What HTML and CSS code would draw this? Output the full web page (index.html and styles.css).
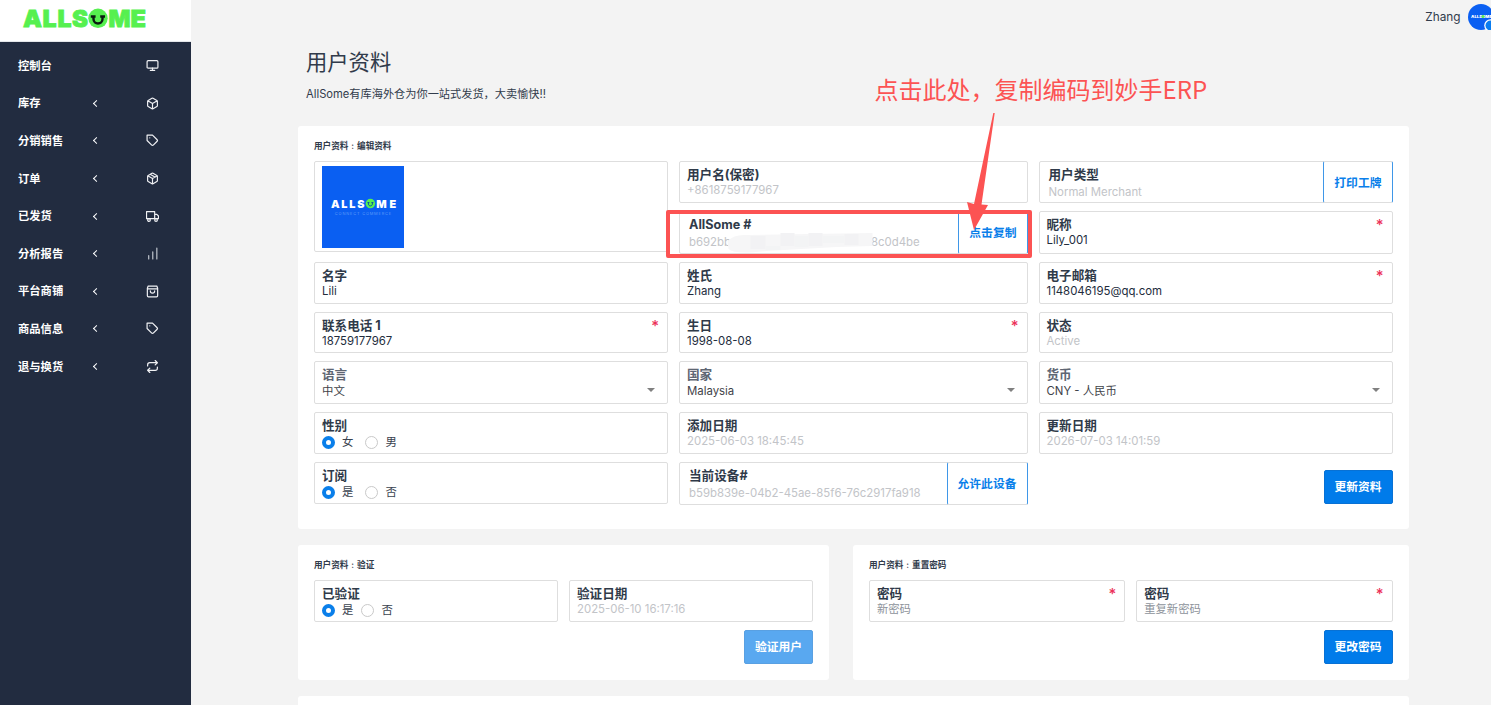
FILE: index.html
```
<!DOCTYPE html>
<html lang="zh-CN">
<head>
    <meta charset="UTF-8">
    <meta name="viewport" content="width=device-width, initial-scale=1.0">
    <title>用户资料</title>
    <link rel="stylesheet" href="styles.css">
</head>
<body>
    <aside class="sidebar">
        <div class="brand">
            <svg class="brand-logo" width="124" height="20" viewBox="0 0 124 20">
                <g class="brand-text">
                    <text x="0" y="18" textLength="19" lengthAdjust="spacingAndGlyphs">A</text>
                    <text x="19.5" y="18" textLength="14" lengthAdjust="spacingAndGlyphs">L</text>
                    <text x="34.500" y="18" textLength="14" lengthAdjust="spacingAndGlyphs">L</text>
                    <text x="49" y="18" textLength="16" lengthAdjust="spacingAndGlyphs">S</text>
                    <text x="85.500" y="18" textLength="22" lengthAdjust="spacingAndGlyphs">M</text>
                    <text x="107.500" y="18" textLength="15.5" lengthAdjust="spacingAndGlyphs">E</text>
                </g>
                <circle cx="75" cy="9.300" r="9.7" fill="#56f04f"/>
                <path d="M67.800 7.500h4.800M77.200 7.500h4.800M70.500 7.500v2.500c0 6 9 6 9 0V7.500" fill="none" stroke="#0b1a10" stroke-width="2.4"/>
            </svg>
        </div>
        <nav class="menu">
            <a class="menu-item"><span>控制台</span><i></i>
                <svg class="icon" viewBox="0 0 24 24"><rect x="2" y="3" width="20" height="14" rx="2"/><path d="M8 21h8M12 17v4"/></svg></a>
            <a class="menu-item"><span>库存</span><i class="chevron"></i>
                <svg class="icon" viewBox="0 0 24 24"><path d="M21 16V8a2 2 0 0 0-1-1.73l-7-4a2 2 0 0 0-2 0l-7 4A2 2 0 0 0 3 8v8a2 2 0 0 0 1 1.73l7 4a2 2 0 0 0 2 0l7-4A2 2 0 0 0 21 16zM3.27 6.96L12 12.01l8.73-5.05M12 22.08V12"/></svg></a>
            <a class="menu-item"><span>分销销售</span><i class="chevron"></i>
                <svg class="icon" viewBox="0 0 24 24"><path d="M20.59 13.41l-7.17 7.17a2 2 0 0 1-2.83 0L2 12V2h10l8.59 8.59a2 2 0 0 1 0 2.82zM7 7h.01"/></svg></a>
            <a class="menu-item"><span>订单</span><i class="chevron"></i>
                <svg class="icon" viewBox="0 0 24 24"><path d="M16.5 9.4l-9-5.19M21 16V8a2 2 0 0 0-1-1.73l-7-4a2 2 0 0 0-2 0l-7 4A2 2 0 0 0 3 8v8a2 2 0 0 0 1 1.73l7 4a2 2 0 0 0 2 0l7-4A2 2 0 0 0 21 16zM3.27 6.96L12 12.01l8.73-5.05M12 22.08V12"/></svg></a>
            <a class="menu-item"><span>已发货</span><i class="chevron"></i>
                <svg class="icon" viewBox="0 0 24 24"><path d="M1 3h15v13H1zM16 8h4l3 3v5h-7z"/><circle cx="5.5" cy="18.5" r="2.5"/><circle cx="18.5" cy="18.5" r="2.5"/></svg></a>
            <a class="menu-item"><span>分析报告</span><i class="chevron"></i>
                <svg class="icon dim" viewBox="0 0 24 24"><path d="M20 22V2M12.5 22V9M5 22v-6"/></svg></a>
            <a class="menu-item"><span>平台商铺</span><i class="chevron"></i>
                <svg class="icon" viewBox="0 0 24 24"><path d="M4 2h16l1.500 4v14a2 2 0 0 1-2 2h-15a2 2 0 0 1-2-2V6zM3 7h18M16 11a4 4 0 0 1-8 0"/></svg></a>
            <a class="menu-item"><span>商品信息</span><i class="chevron"></i>
                <svg class="icon" viewBox="0 0 24 24"><path d="M20.59 13.41l-7.17 7.17a2 2 0 0 1-2.83 0L2 12V2h10l8.59 8.59a2 2 0 0 1 0 2.82zM7 7h.01"/></svg></a>
            <a class="menu-item"><span>退与换货</span><i class="chevron"></i>
                <svg class="icon" viewBox="0 0 24 24"><path d="M17 1l4 4-4 4M3 11V9a4 4 0 0 1 4-4h14M7 23l-4-4 4-4M21 13v2a4 4 0 0 1-4 4H3"/></svg></a>
        </nav>
    </aside>

    <main class="page">
        <header class="topbar">
            <span>Zhang</span>
            <svg class="user-avatar" width="26" height="26" viewBox="0 0 26 26">
                <circle cx="13" cy="13" r="13" fill="#0a5ff2"/>
                <text x="3" y="14" textLength="21" lengthAdjust="spacingAndGlyphs">ALLSOME</text>
                <circle cx="15" cy="12.500" r="1.500" fill="#56f04f"/>
                <circle cx="22.500" cy="21.500" r="6.300" fill="#fff"/>
                <circle cx="22.500" cy="21.500" r="5" fill="#0a7df0"/>
            </svg>
        </header>

        <div class="heading">
            <h1>用户资料</h1>
            <p>AllSome有库海外仓为你一站式发货，大卖愉快!!</p>
        </div>

        <section class="card card-profile">
            <h2>用户资料 : 编辑资料</h2>
            <div class="profile-grid">
                <div class="field photo">
                    <svg width="82" height="82" viewBox="0 0 83 83">
                        <rect width="83" height="83" fill="#0a5ff2"/>
                        <g class="photo-text">
                            <text x="9" y="42.500" textLength="34" lengthAdjust="spacing">ALLS</text>
                            <text x="55" y="42.500" textLength="20" lengthAdjust="spacing">ME</text>
                        </g>
                        <circle cx="49" cy="38" r="4.800" fill="#56f04f"/>
                        <path d="M46 37h2M50 37h2M47 37v1.500c0 2.500 4 2.500 4 0V37" fill="none" stroke="#0a4fa0"/>
                        <text class="photo-sub" x="13" y="49.500" textLength="57" lengthAdjust="spacing">CONNECT COMMERCE</text>
                    </svg>
                </div>
                <div class="field muted">
                    <label>用户名(保密)</label>
                    <span>+8618759177967</span>
                </div>
                <div class="field muted with-button">
                    <div>
                        <label>用户类型</label>
                        <span>Normal Merchant</span>
                    </div>
                    <button class="side-button">打印工牌</button>
                </div>

                <div class="field muted with-button">
                    <div>
                        <label>AllSome #</label>
                        <span class="code">b692bb<svg class="mosaic" width="147" height="20" viewBox="0 0 146 20">
                            <path d="M1 8Q8 1 20 2L146 0V13L110 14 40 18Q8 22 2 16z" fill="#f6f6f7"/>
                            <path d="M24 3h15v13H24zM54 0h14v13H54zM82 0h14v13H82zM118 1h14v11h-14z" fill="#f2f2f4"/>
                            <path d="M39 13h15v4H39zM68 3h14v11H68zM96 3h22v7H96z" fill="#f3f4f5"/>
                        </svg>8c0d4be</span>
                    </div>
                    <button class="side-button">点击复制</button>
                </div>
                <div class="field required">
                    <label>昵称</label>
                    <span>Lily_001</span>
                </div>

                <div class="field">
                    <label>名字</label>
                    <span>Lili</span>
                </div>
                <div class="field">
                    <label>姓氏</label>
                    <span>Zhang</span>
                </div>
                <div class="field required">
                    <label>电子邮箱</label>
                    <span>1148046195@qq.com</span>
                </div>

                <div class="field required">
                    <label>联系电话 1</label>
                    <span>18759177967</span>
                </div>
                <div class="field required">
                    <label>生日</label>
                    <span>1998-08-08</span>
                </div>
                <div class="field muted">
                    <label>状态</label>
                    <span>Active</span>
                </div>

                <div class="field select">
                    <label>语言</label>
                    <span>中文</span>
                </div>
                <div class="field select">
                    <label>国家</label>
                    <span>Malaysia</span>
                </div>
                <div class="field select">
                    <label>货币</label>
                    <span>CNY - 人民币</span>
                </div>

                <div class="field">
                    <label>性别</label>
                    <div class="radios"><i class="radio on"></i>女<i class="radio"></i>男</div>
                </div>
                <div class="field muted">
                    <label>添加日期</label>
                    <span>2025-06-03 18:45:45</span>
                </div>
                <div class="field muted">
                    <label>更新日期</label>
                    <span>2026-07-03 14:01:59</span>
                </div>

                <div class="field short">
                    <label>订阅</label>
                    <div class="radios"><i class="radio on"></i>是<i class="radio"></i>否</div>
                </div>
                <div class="field muted with-button">
                    <div>
                        <label>当前设备#</label>
                        <span>b59b839e-04b2-45ae-85f6-76c2917fa918</span>
                    </div>
                    <button class="side-button">允许此设备</button>
                </div>
                <button class="button">更新资料</button>
            </div>
        </section>

        <div class="card-row">
            <section class="card">
                <h2>用户资料 : 验证</h2>
                <div class="pair-grid">
                    <div class="field">
                        <label>已验证</label>
                        <div class="radios tight"><i class="radio on"></i>是<i class="radio"></i>否</div>
                    </div>
                    <div class="field muted">
                        <label>验证日期</label>
                        <span>2025-06-10 16:17:16</span>
                    </div>
                </div>
                <button class="button disabled">验证用户</button>
            </section>
            <section class="card">
                <h2>用户资料 : 重置密码</h2>
                <div class="pair-grid">
                    <div class="field placeholder required">
                        <label>密码</label>
                        <span>新密码</span>
                    </div>
                    <div class="field placeholder required">
                        <label>密码</label>
                        <span>重复新密码</span>
                    </div>
                </div>
                <button class="button">更改密码</button>
            </section>
        </div>

        <section class="card card-next"></section>
    </main>

    <!-- hint drawn over the form -->
    <div class="hint-text">点击此处，复制编码到妙手ERP</div>
    <div class="hint-box"></div>
    <svg class="hint-arrow" width="22" height="117" viewBox="0 0 22 117">
        <path d="M26.300 0h1.400L14.500 91.500l6.500.5L7 117 0 89l7 2z"/>
    </svg>
</body>
</html>
```

FILE: styles.css
```
* {
    box-sizing: border-box;
}
body {
    margin: 0;
    height: 705px;
    display: flex;
    overflow: hidden;
    position: relative;
    background-color: #f3f3f3;
    color: #313b4b;
    font-family: Inter, 'Noto Sans CJK SC', sans-serif;
    font-size: 11.4px;
}
h1, h2, p {
    margin: 0;
}
button {
    font-family: inherit;
    padding: 0;
}

/* sidebar */
.sidebar {
    width: 191px;
    flex: none;
    background-color: #222c40;
}
.brand {
    height: 42px;
    padding: 9px 0 0 23px;
    background-color: #fff;
    border-bottom: 1px solid #e4e6e9;
}
.brand-logo {
    display: block;
    overflow: visible;
}
.brand-text {
    font-size: 23px;
    font-weight: 900;
    fill: #56f04f;
    stroke: #56f04f;
    stroke-width: 0.8px;
}
.menu {
    padding-top: 5px;
}
.menu-item {
    height: 37.6px;
    padding: 0 32px 0 18px;
    display: grid;
    grid-template-columns: 74px 1fr 13px;
    align-items: center;
    color: #fff;
    font-size: 11.3px;
    font-weight: 700;
}
.menu-item span {
    margin-top: -2px;
}
.chevron {
    width: 5px;
    height: 5px;
    margin-left: 2px;
    border-left: 1.5px solid #fff;
    border-bottom: 1.5px solid #fff;
    transform: rotate(45deg);
}
.icon {
    width: 13px;
    height: 13px;
    fill: none;
    stroke: #f0f1f4;
    stroke-width: 2.2;
    stroke-linecap: round;
    stroke-linejoin: round;
}
.dim {
    stroke: #c0c5cd;
}

/* page */
.page {
    flex: 1;
    padding: 0 82.5px 0 107px;
}
.topbar {
    height: 34px;
    margin-right: -85px;
    display: flex;
    justify-content: flex-end;
    align-items: center;
    gap: 7px;
    font-size: 11.8px;
}
.user-avatar {
    font-size: 4px;
    font-weight: 900;
    fill: #fff;
}
.heading {
    height: 92px;
    padding: 13px 0 0 8px;
}
.heading h1 {
    font-size: 21.3px;
    font-weight: 400;
    line-height: 30px;
}
.heading p {
    margin-top: 8px;
    line-height: 18px;
    font-size: 11.2px;
}
.card {
    padding: 12px 16px 16px;
    background-color: #fff;
    border-radius: 3px;
}
.card-profile {
    height: 403px;
}
.card h2 {
    height: 23px;
    font-size: 8.6px;
    font-weight: 600;
    line-height: 16px;
    word-spacing: 0.8px;
}
.profile-grid {
    display: grid;
    grid-template-columns: 354px 348.5px 354px;
    grid-template-rows: 42px 42.5px 42px 41.5px 43px 42px 43px;
    gap: 8px 11px;
}
.card-row {
    margin-top: 16px;
    display: grid;
    grid-template-columns: 531px 555.5px;
    gap: 24px;
}
.card-row .card {
    height: 135px;
}
.pair-grid {
    display: grid;
    grid-template-columns: 1fr 1fr;
    gap: 11px;
}
.pair-grid .field {
    height: 42px;
}
.card-next {
    height: 40px;
    margin-top: 16px;
}

/* fields */
.field {
    position: relative;
    padding: 4px 7px 0;
    border: 1px solid #dedede;
    border-radius: 2px;
    color: #222c3c;
}
.field label {
    display: block;
    color: #2f3a49;
    font-size: 12.6px;
    font-weight: 700;
    line-height: 17px;
    white-space: nowrap;
}
.field span {
    display: block;
    line-height: 15px;
    white-space: nowrap;
}
.photo {
    grid-row: span 2;
    height: 91px;
}
.photo svg {
    display: block;
}
.photo-text {
    font-size: 11px;
    font-weight: 900;
    fill: #fff;
}
.photo-sub {
    font-size: 4px;
    fill: #5f9bf8;
}
.short {
    height: 42px;
}
.muted span {
    color: #c2c4c8;
}
.placeholder span {
    color: #8d939b;
    font-size: 11.3px;
}
.required::after {
    content: "*";
    position: absolute;
    top: 4px;
    right: 8px;
    color: #ec3159;
    font-size: 15px;
    font-weight: 500;
    line-height: 18px;
}
.select label {
    color: #5e6673;
}
.select span {
    line-height: 16px;
    color: #3f4349;
}
.select::after {
    content: "";
    position: absolute;
    top: 26px;
    right: 12px;
    border: 4px solid transparent;
    border-top: 4px solid #808080;
    border-bottom: 0;
}
.with-button {
    padding: 0;
    display: flex;
    justify-content: space-between;
}
.with-button > div {
    padding: 5px 0 0 9px;
}
.with-button label {
    line-height: 16px;
}
.with-button span {
    line-height: 18px;
}
.side-button {
    margin: -1px;
    padding: 0 10px 2px;
    background-color: #fff;
    color: #0a7fea;
    border: 1px solid #3f97e8;
    border-top-color: #dedede;
    border-bottom-color: #dedede;
    border-radius: 2px;
    font-size: 11.8px;
    font-weight: 600;
}
.mosaic {
    margin: -3px -2px -7px -5px;
    position: relative;
}
.radios {
    height: 16px;
    display: flex;
    align-items: center;
    gap: 7px;
    color: #3a4350;
    line-height: 14px;
}
.radio {
    width: 13px;
    height: 13px;
    border: 1px solid #c9c9c9;
    border-radius: 50%;
}
.radio + .radio {
    margin-left: 5px;
}
.tight .radio + .radio {
    margin-left: 1px;
}
.radio.on {
    border: 4px solid #0a7fea;
}
.button {
    width: 69px;
    height: 34px;
    display: block;
    margin: 8px 0 0 auto;
    padding-bottom: 3px;
    background-color: #007bea;
    color: #fff;
    border: 1px solid #0871d4;
    border-radius: 2px;
    font-size: 11.8px;
    font-weight: 700;
}
.disabled {
    background-color: #59a8f0;
    border-color: #59a0e2;
}

/* hint */
.hint-text {
    position: absolute;
    left: 874.5px;
    top: 71px;
    color: #fc5353;
    font-family: 'Noto Sans CJK SC', sans-serif;
    font-size: 24px;
    font-weight: 400;
    line-height: 36px;
    white-space: nowrap;
}
.hint-box {
    position: absolute;
    left: 666px;
    top: 210px;
    width: 366px;
    height: 48px;
    border: 4px solid #fc5353;
    border-radius: 2px;
}
.hint-arrow {
    position: absolute;
    left: 967px;
    top: 113px;
    overflow: visible;
    fill: #fc5353;
}
```
